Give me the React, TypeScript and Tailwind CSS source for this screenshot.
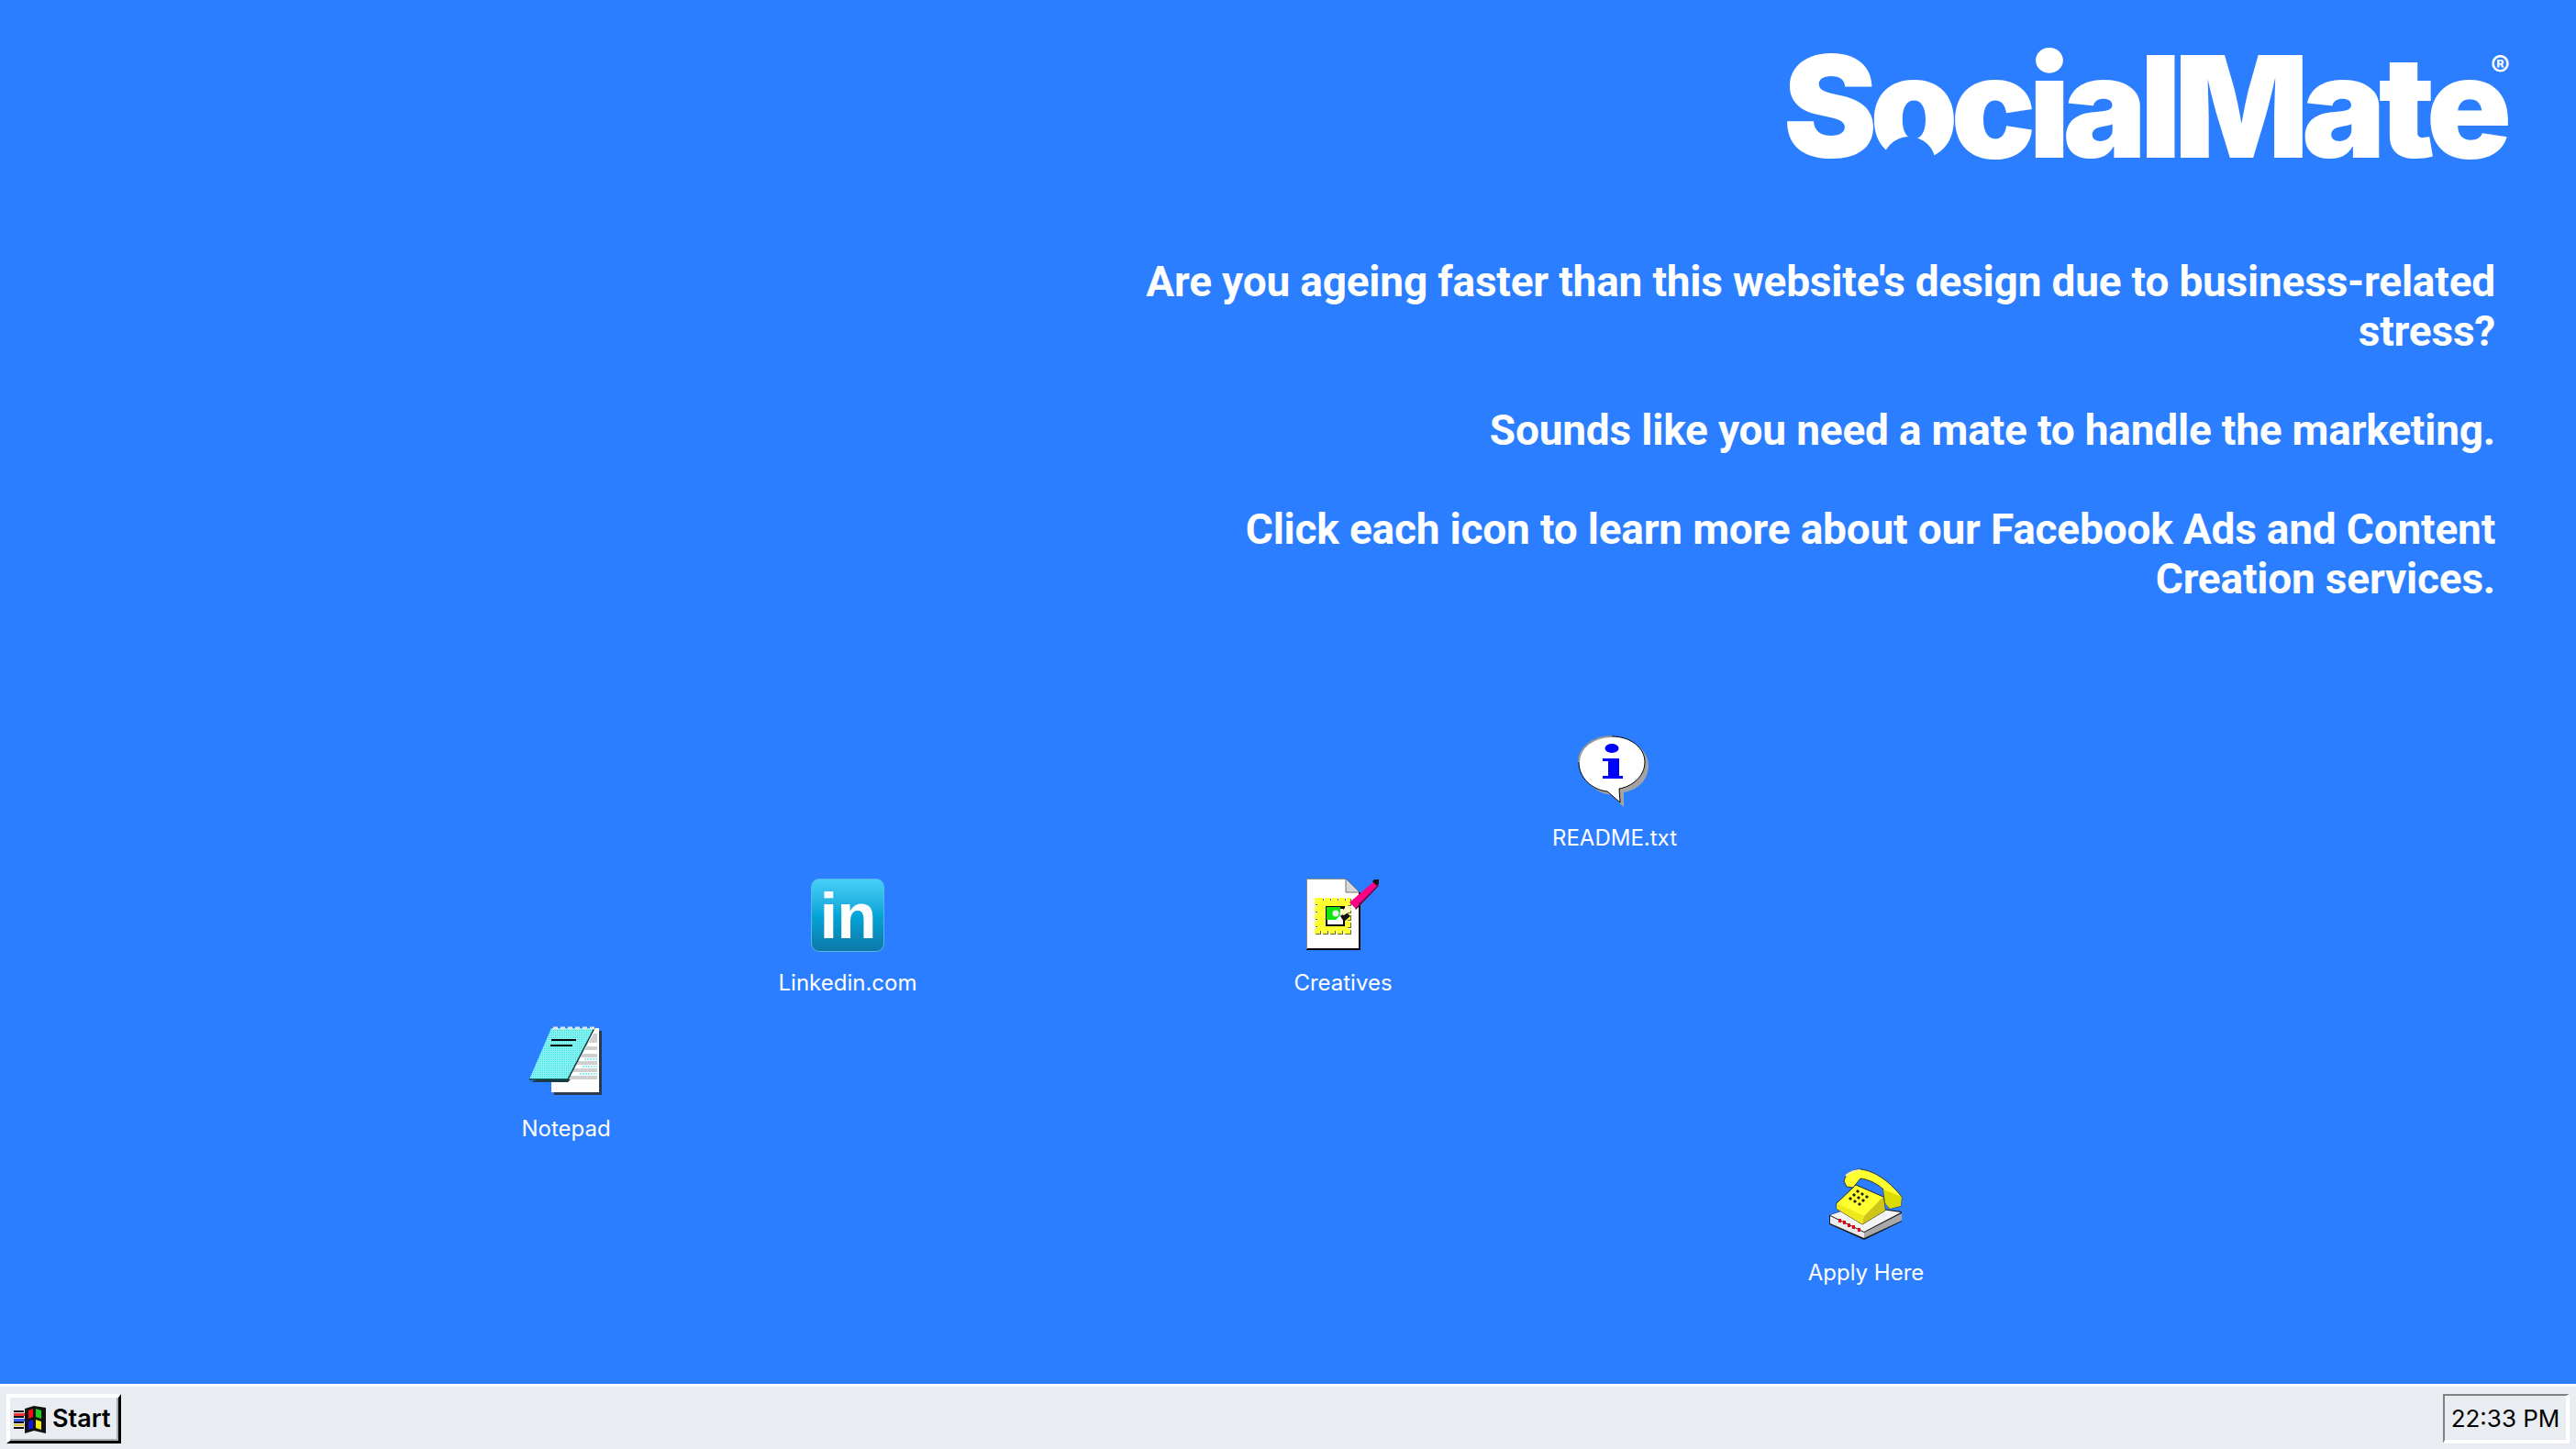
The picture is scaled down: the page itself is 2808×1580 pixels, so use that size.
const ReadmeIcon = () => (
  <svg viewBox="0 0 80 80" className="h-20 w-20">
    <path d="M5 33C5 16 21 4 41 4s36 12 36 29-14 27-27 29l0 16-13-13C18 62 5 50 5 33Z" fill="#a3a3a3" />
    <path d="M1 29C1 13 17 1 37 1s36 12 36 28-15 27-28 29l1 15-14-12C15 59 1 46 1 29Z" fill="#fff" stroke="#000" strokeWidth="1" />
    <path d="M1 29C1 13 17 1 37 1" fill="none" stroke="#9a9a9a" strokeWidth="2" />
    <ellipse cx="37" cy="14" rx="7.5" ry="5" fill="#0000ff" />
    <path d="M27 25h18v19h4v3H27v-3h6V28h-6Z" fill="#0000ff" />
  </svg>
);

const LinkedinIcon = () => (
  <div className="flex h-20 w-20 items-center justify-center overflow-hidden rounded-[9px] border border-[#5bb6e6] bg-gradient-to-b from-[#44cff7] via-[#04a5d8] to-[#0d78a8] font-['Liberation_Sans',sans-serif] text-[71px] leading-none font-bold tracking-[-1px] text-white">
    in
  </div>
);

const CreativesIcon = () => (
  <svg viewBox="0 0 80 80" className="h-20 w-20">
    <path d="M0 0h43l15 15v63H0Z" fill="#fff" />
    <path d="M0 78h59V15h-2v61H0Z" fill="#000" />
    <path d="M0 0h43v1H1v76H0Z" fill="#8a8a8a" />
    <path d="M43 0l15 15H43Z" fill="#d8d8d8" stroke="#555" strokeWidth="0.8" />
    <rect x="13" y="25" width="33" height="33" fill="none" stroke="#6a6a30" strokeWidth="6" strokeDasharray="6 2" />
    <rect x="12" y="24" width="33" height="33" fill="#ffff30" stroke="#ffff30" strokeWidth="6" strokeDasharray="6 2" />
    <rect x="21" y="30" width="21" height="22" fill="#000" />
    <rect x="23" y="33" width="17" height="17" fill="#fff" />
    <path d="M22 31h15v9l-5 5H22Z" fill="#0ee40e" />
    <circle cx="32" cy="38" r="3.5" fill="#e8f5e8" />
    <path d="M37 41l6-5 5 5-7 6Z" fill="#111" />
    <path d="M36 38l9-9 5 5-9 6Z" fill="#fff6c0" />
    <path d="M47 26L74 3l4 4-25 25Z" fill="#ff0084" />
    <path d="M74 1h5v5l-2 2-5-5Z" fill="#111" />
    <path d="M53 32l25-25 1 1-25 26Z" fill="#7a0040" />
  </svg>
);

const NotepadIcon = () => (
  <svg viewBox="0 0 80 80" className="h-20 w-20">
    <defs>
      <pattern id="dither" width="2" height="2" patternUnits="userSpaceOnUse">
        <rect width="2" height="2" fill="#8bf5f5" />
        <rect width="1" height="1" fill="#3ddada" />
      </pattern>
    </defs>
    <rect x="27" y="5" width="52" height="70" fill="#2a3a50" />
    <rect x="24" y="2" width="52" height="70" fill="#fff" />
    <path d="M42 58l28-50h4v10H60v4h14v4H55v4h19v4H50v4h24v4H46v4h28v4H42v4h32v4H24V58Z" fill="#cfcfcf" />
    <path d="M60 36h14M58 44h16M55 52h19" stroke="#19e5e5" strokeWidth="1" strokeDasharray="2 1" />
    <path d="M2 61h40l3-3-36 0Z" fill="#1d3b46" />
    <path d="M24 2h47L42 58H0Z" fill="url(#dither)" />
    <path d="M71 2L42 58h-42l-1-2" fill="none" stroke="#063b3b" strokeWidth="1.5" />
    <path d="M24 15h27M23 21h24" stroke="#000" strokeWidth="2" />
    <path d="M26 2h46" stroke="#e6e6e6" strokeWidth="3" strokeDasharray="5 3" />
  </svg>
);

const PhoneIcon = () => (
  <svg viewBox="0 0 80 80" className="h-20 w-20">
    <path d="M0 51L30 40 79 47v11L38 78 0 61Z" fill="#1c1c1c" />
    <path d="M38 70L79 49v8L38 76Z" fill="#a9a9a9" />
    <path d="M1 52L38 70v6L1 60Z" fill="#ececec" />
    <path d="M1 51L30 41l48 7-40 21Z" fill="#f4f4f4" />
    <path d="M10 55h3v4h-3zM15 57h3v4h-3zM20 60h3v4h-3zM25 62h3v4h-3zM31 65h3v4h-3z" fill="#e60012" />
    <path d="M8 38L29 18l30 13 2 15-25 15L8 44Z" fill="#ffff30" stroke="#222" strokeWidth="1" />
    <path d="M36 61L8 44v-6l30 14Z" fill="#f0e81e" />
    <path d="M38 52l21-21 2 15-25 15Z" fill="#cfc41a" />
    <path d="M22 34l2-2M27 37l2-2M32 40l2-2M26 30l2-2M31 33l2-2M36 36l2-2M30 26l2-2M35 29l2-2M40 32l2-2" stroke="#222" strokeWidth="3" />
    <path d="M16 14C18 5 26 1 34 1 52 3 68 17 79 31L78 41 66 44 61 38 59 23C54 18 44 12 34 11L26 21 19 20Z" fill="#ffff30" stroke="#333" strokeWidth="1" />
    <path d="M59 23L79 31 78 41 66 44 61 38Z" fill="#dcdc00" />
    <path d="M18 8C24 3 29 2 34 2" fill="none" stroke="#fff7a0" strokeWidth="2" />
  </svg>
);

const WindowsFlag = () => (
  <svg viewBox="0 0 35 30" className="h-[30px] w-[35px]">
    <path d="M0 5h11v2H0zM0 11h11v2H0zM0 17h11v2H0zM0 23h11v2H0z" fill="#111" strokeDasharray="2 2" />
    <path d="M0 8h12v3H0z" fill="#ef3434" />
    <path d="M0 14h12v3H0z" fill="#3a5ef2" />
    <path d="M0 20h12v2H0z" fill="#e8c43c" />
    <path d="M12 3L22 0l13 2v28l-13-3-10 3Z" fill="#111" />
    <path d="M16 5l5-2v9l-5 2Z" fill="#ee1111" />
    <path d="M24 3l6 2v9l-6-2Z" fill="#1fd11f" />
    <path d="M16 17l5-2v9l-5 2Z" fill="#1414e0" />
    <path d="M24 15l6 2v9l-6-2Z" fill="#f2ea14" />
  </svg>
);

const icons = [
  { label: "README.txt", pos: "left-[1670px] top-[802px] gap-[17px]", icon: <ReadmeIcon /> },
  { label: "Linkedin.com", pos: "left-[834px] top-[958px] gap-[19px]", icon: <LinkedinIcon /> },
  { label: "Creatives", pos: "left-[1374px] top-[958px] gap-[19px]", icon: <CreativesIcon /> },
  { label: "Notepad", pos: "left-[527px] top-[1119px] gap-[17px]", icon: <NotepadIcon /> },
  { label: "Apply Here", pos: "left-[1944px] top-[1274px] gap-[19px]", icon: <PhoneIcon /> },
];

export default function App() {
  return (
    <div className="flex h-screen flex-col overflow-hidden bg-[#2b7eff] font-['Inter',sans-serif] text-white">
      <main className="relative flex-1">
        <div className="flex flex-col items-end pt-[41px] pr-[78px]">
          <div className="relative font-['Inter',sans-serif] text-[154px] leading-[150px] font-black tracking-[-8.1px]">
            SocialMate
            <span className="absolute top-[108px] left-[108px] h-[32px] w-[58px] rounded-t-full bg-[#2b7eff]" />
            <span className="absolute top-[16px] right-[-6px] text-[32px] leading-none font-bold tracking-normal">®</span>
          </div>
        </div>
        <div className="mt-[89px] ml-auto w-[1600px] pr-[88px] text-right font-['Roboto',sans-serif] text-[46px] leading-[54px] font-bold tracking-[-0.2px]">
          <p>Are you ageing faster than this website's design due to business-related stress?</p>
          <p className="mt-[54px]">Sounds like you need a mate to handle the marketing.</p>
          <p className="mt-[54px]">Click each icon to learn more about our Facebook Ads and Content Creation services.</p>
        </div>
        {icons.map((item) => (
          <div key={item.label} className={`absolute flex w-[180px] flex-col items-center ${item.pos}`}>
            {item.icon}
            <span className="text-[24px] leading-[30px]">{item.label}</span>
          </div>
        ))}
      </main>
      <footer className="flex h-[71px] items-start justify-between border-t-[3px] border-white bg-[#e9ecf1] px-[7px] pt-[8px] text-black">
        <button className="flex h-[54px] w-[125px] items-center gap-[7px] border-t-4 border-r-[3px] border-b-[3px] border-l-4 border-t-white border-r-black border-b-black border-l-white pl-[4px] text-[27px] font-semibold shadow-[inset_-2px_-2px_0_#a9adb3]">
          <WindowsFlag />
          Start
        </button>
        <div className="flex h-[54px] w-[138px] items-center justify-center border-t-2 border-r-4 border-b-4 border-l-2 border-t-[#7f8285] border-r-white border-b-white border-l-[#7f8285] text-[26px]">
          22:33 PM
        </div>
      </footer>
    </div>
  );
}
